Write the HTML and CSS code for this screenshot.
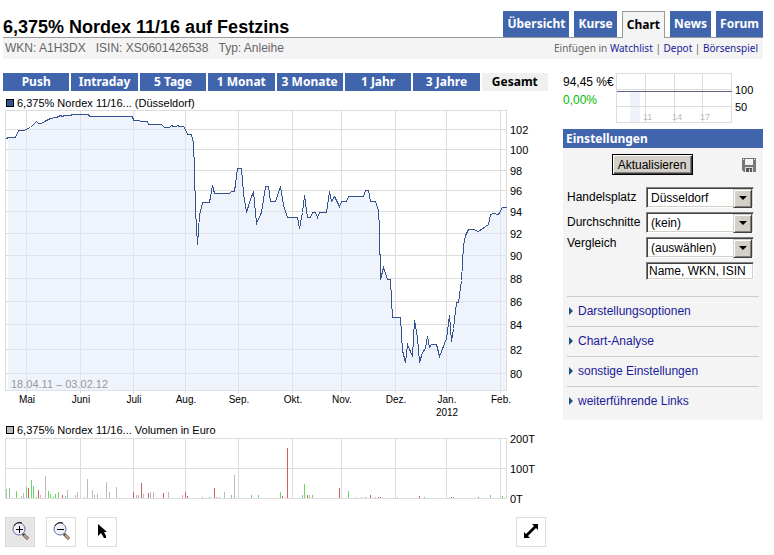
FILE: index.html
```html
<!DOCTYPE html>
<html lang="de">
  <head>
    <meta charset="UTF-8">
    <title>6,375% Nordex 11/16 auf Festzins - Chart</title>
    <link rel="stylesheet" href="styles.css">
  </head>
  <body>
    <div class="page">
      <header class="header">
        <h1 class="title">6,375% Nordex 11/16 auf Festzins</h1>
        <nav class="tabs">
          <a class="tab" href="#">Übersicht</a>
          <a class="tab" href="#">Kurse</a>
          <a class="tab tab-active" href="#">Chart</a>
          <a class="tab" href="#">News</a>
          <a class="tab" href="#">Forum</a>
        </nav>
      </header>
      <div class="subbar">
        <div class="ids">
          <span>WKN: A1H3DX</span>
          <span>ISIN: XS0601426538</span>
          <span>Typ: Anleihe</span>
        </div>
        <div class="add">Einfügen in <a href="#">Watchlist</a> | <a href="#">Depot</a> | <a href="#">Börsenspiel</a></div>
      </div>

      <div class="content">
        <main class="main">
          <div class="ranges">
            <button type="button" class="range">Push</button>
            <button type="button" class="range">Intraday</button>
            <button type="button" class="range">5 Tage</button>
            <button type="button" class="range">1 Monat</button>
            <button type="button" class="range">3 Monate</button>
            <button type="button" class="range">1 Jahr</button>
            <button type="button" class="range">3 Jahre</button>
            <button type="button" class="range range-active">Gesamt</button>
          </div>

          <div class="legend"><span class="swatch swatch-price"></span>6,375% Nordex 11/16... (Düsseldorf)</div>
          <svg class="chart" viewBox="3 110 545 312">
            <g transform="translate(.5 .5)">
              <path class="grid" d="M5 110H506V390H5ZM5 129H506M5 149H506M5 170H506M5 190H506M5 211H506M5 233H506M5 255H506M5 278H506M5 301H506M5 324H506M5 349H506M5 373H506M26 110V392M80 110V392M133 110V392M185 110V392M238 110V392M292 110V392M341 110V392M395 110V392M446 110V392M500 110V392"/>
              <path class="area" d="M7 390V138L8 137H15L18 130H23L30 127 36 121 38 123 41 123 46 120 50 118 56 117 60 115 62 116 64 115H70L72 114H88L89 116H132L133 120H139L140 121H147L148 124H161L164 127H169L171 125 173 126H176L177 125 179 126H183L185 129 187 134H191L193 143 194 170 195 210 197 244 199 215 202 202H209L212 185 214 193H229L231 191H234L237 168H241L243 193 246 212 249 202 253 191 256 223 261 212 265 186H268L270 201H275L280 186 283 205 287 217H297L299 228 302 212 304 195 307 217H310L312 212H315L317 217 319 212H326L329 191 331 201 334 196 339 206 341 201H346L348 196H363L365 190H368L370 201H375L378 210 379 228 380 279 383 267 387 279H390L391 300 392 317H400L402 350 405 362 407 344 412 356 414 320 417 337 419 362 422 352 425 348 427 336 429 347 431 344H436L439 356 446 338 449 315 451 341 453 328 456 302H458L461 280 463 245 465 235 468 229H473L478 231 488 224 490 214 493 213 498 214 502 207H505V390Z"/>
              <path class="line" d="M6 138L8 137H15L18 130H23L30 127 36 121 38 123 41 123 46 120 50 118 56 117 60 115 62 116 64 115H70L72 114H88L89 116H132L133 120H139L140 121H147L148 124H161L164 127H169L171 125 173 126H176L177 125 179 126H183L185 129 187 134H191L193 143 194 170 195 210 197 244 199 215 202 202H209L212 185 214 193H229L231 191H234L237 168H241L243 193 246 212 249 202 253 191 256 223 261 212 265 186H268L270 201H275L280 186 283 205 287 217H297L299 228 302 212 304 195 307 217H310L312 212H315L317 217 319 212H326L329 191 331 201 334 196 339 206 341 201H346L348 196H363L365 190H368L370 201H375L378 210 379 228 380 279 383 267 387 279H390L391 300 392 317H400L402 350 405 362 407 344 412 356 414 320 417 337 419 362 422 352 425 348 427 336 429 347 431 344H436L439 356 446 338 449 315 451 341 453 328 456 302H458L461 280 463 245 465 235 468 229H473L478 231 488 224 490 214 493 213 498 214 502 207H506"/>
            </g>
            <g class="axis">
              <text x="510" y="134">102</text>
              <text x="510" y="154">100</text>
              <text x="510" y="175">98</text>
              <text x="510" y="195">96</text>
              <text x="510" y="216">94</text>
              <text x="510" y="238">92</text>
              <text x="510" y="260">90</text>
              <text x="510" y="283">88</text>
              <text x="510" y="306">86</text>
              <text x="510" y="329">84</text>
              <text x="510" y="354">82</text>
              <text x="510" y="378">80</text>
            </g>
            <g class="months">
              <text x="27" y="403">Mai</text>
              <text x="81" y="403">Juni</text>
              <text x="134" y="403">Juli</text>
              <text x="186" y="403">Aug.</text>
              <text x="239" y="403">Sep.</text>
              <text x="293" y="403">Okt.</text>
              <text x="342" y="403">Nov.</text>
              <text x="396" y="403">Dez.</text>
              <text x="447" y="403">Jan.</text>
              <text x="447" y="416">2012</text>
              <text x="501" y="403">Feb.</text>
            </g>
            <text class="period" x="11" y="388">18.04.11 – 03.02.12</text>
          </svg>

          <div class="legend"><span class="swatch swatch-volume"></span>6,375% Nordex 11/16... Volumen in Euro</div>
          <svg class="chart" viewBox="3 437 545 68">
            <g transform="translate(.5 .5)">
              <path class="grid" d="M5 438H506V498H5ZM5 468H506M26 438V498M80 438V498M133 438V498M185 438V498M238 438V498M292 438V498M341 438V498M395 438V498M446 438V498M500 438V498"/>
            </g>
            <g transform="translate(.5)">
              <path class="vol vol-flat" d="M6 498v-9M21 498v-2M23 498v-5M40 498v-3M45 498v-22M67 498v-8M75 498v-3M77 498v-6M84 498v-1M87 498v-19M92 498v-8M94 498v-3M97 498v-4M106 498v-16M109 498v-6M116 498v-11M136 498v-3M138 498v-3M143 498v-4M150 498v-6M153 498v-6M168 498v-6M182 498v-3M216 498v-1M219 498v-1M224 498v-6M234 498v-23M309 498v-3M356 498v-1M361 498v-1M375 498v-1M397 498v-1"/>
              <path class="vol vol-up" d="M9 498v-10M16 498v-7M26 498v-11M31 498v-18M33 498v-12M36 498v-1M48 498v-7M50 498v-4M53 498v-1M55 498v-4M58 498v-6M65 498v-2M202 498v-1M209 498v-1M231 498v-3M251 498v-3M258 498v-3M280 498v-6M302 498v-3M304 498v-14M312 498v-3M348 498v-7M365 498v-1M424 498v-1M453 498v-1M490 498v-3M502 498v-2"/>
              <path class="vol vol-down" d="M28 498v-10M38 498v-8M62 498v-3M133 498v-6M141 498v-15M148 498v-5M163 498v-5M185 498v-6M187 498v-2M214 498v-10M282 498v-2M287 498v-50M307 498v-3M339 498v-10M370 498v-3M378 498v-1M380 498v-1M419 498v-2M451 498v-1M478 498v-1"/>
            </g>
            <g class="axis">
              <text x="510" y="443">200T</text>
              <text x="510" y="473">100T</text>
              <text x="510" y="503">0T</text>
            </g>
          </svg>

          <div class="tools">
            <button type="button" class="tool tool-active" aria-label="Vergrößern">
              <svg width="28" height="28" viewBox="0 0 28 28">
                <path d="M17 16l5 5" stroke="#333" stroke-width="3"/>
                <path d="M18 17l4 4" stroke="#c9a184" stroke-width="2"/>
                <circle cx="13" cy="11" r="6" fill="#eef0fa" stroke="#6a6a9c"/>
                <path d="M8 8a6 6 0 0 1 8-3" fill="none" stroke="#111"/>
                <path class="crisp" d="M10 11h7v1h-7zM13 8h1v7h-1z"/>
              </svg>
            </button>
            <button type="button" class="tool" aria-label="Verkleinern">
              <svg width="28" height="28" viewBox="0 0 28 28">
                <path d="M17 16l5 5" stroke="#333" stroke-width="3"/>
                <path d="M18 17l4 4" stroke="#c9a184" stroke-width="2"/>
                <circle cx="13" cy="11" r="6" fill="#eef0fa" stroke="#6a6a9c"/>
                <path d="M8 8a6 6 0 0 1 8-3" fill="none" stroke="#111"/>
                <path class="crisp" d="M10 11h7v1h-7z"/>
              </svg>
            </button>
            <button type="button" class="tool" aria-label="Auswahl">
              <svg width="28" height="28" viewBox="0 0 28 28">
                <path d="M10 6v12l3-3 3 5h2v-2l-2-4h3z"/>
              </svg>
            </button>
            <button type="button" class="tool tool-expand" aria-label="Chart vergrößern">
              <svg width="28" height="28" viewBox="0 0 28 28">
                <path d="M15 6h6v6l-2-2-8 8 2 2H7v-6l2 2 8-8z"/>
              </svg>
            </button>
          </div>
        </main>

        <aside class="sidebar">
          <div class="quote">
            <div class="quote-values">
              <div>94,45 %€</div>
              <div class="up">0,00%</div>
            </div>
            <svg class="mini" width="147" height="50" viewBox="616 73 147 50">
              <path class="band" d="M630 92h10v30h-10z"/>
              <g transform="translate(.5 .5)">
                <path class="grid" d="M616 73H731V122H616ZM616 89H731M616 106H731M645 73V122M674 73V122M702 73V122"/>
                <path class="mini-line" d="M616 91H731"/>
              </g>
              <g class="hours">
                <text x="643" y="120">11</text>
                <text x="672" y="120">14</text>
                <text x="700" y="120">17</text>
              </g>
              <g class="axis">
                <text x="735" y="94">100</text>
                <text x="735" y="111">50</text>
              </g>
            </svg>
          </div>

          <section class="panel">
            <h2 class="panel-title">Einstellungen</h2>
            <form class="settings">
              <div class="actions">
                <button type="button" class="refresh">Aktualisieren</button>
                <button type="button" class="save" aria-label="Speichern">
                  <svg width="14" height="14" viewBox="0 0 14 14">
                    <path fill="#777" d="M0 0h14v14H2l-2-2z"/>
                    <path fill="#f4f4f4" d="M3 1h8v6H3zM1 1h1v1H1zM12 1h1v1h-1z"/>
                    <path fill="#ddd" d="M3 9h8v5H3z"/>
                    <path fill="#555" d="M4 10h6v4H8v-3H7v3H4z"/>
                  </svg>
                </button>
              </div>
              <div class="fields">
                <label for="market">Handelsplatz</label>
                <div class="select-box">
                  <select id="market"><option>Düsseldorf</option></select>
                </div>
                <label for="average">Durchschnitte</label>
                <div class="select-box">
                  <select id="average"><option>(kein)</option></select>
                </div>
                <label class="label-top" for="compare">Vergleich</label>
                <div class="select-box">
                  <select id="compare"><option>(auswählen)</option></select>
                </div>
                <input class="search" type="text" aria-label="Vergleichswert" value="Name, WKN, ISIN">
              </div>
            </form>
            <ul class="links">
              <li><a href="#">Darstellungsoptionen</a></li>
              <li><a href="#">Chart-Analyse</a></li>
              <li><a href="#">sonstige Einstellungen</a></li>
              <li><a href="#">weiterführende Links</a></li>
            </ul>
          </section>
        </aside>
      </div>
    </div>
  </body>
</html>
```

FILE: styles.css
```css
* {
  box-sizing: border-box;
}
body {
  margin: 0;
  background-color: #fff;
  color: #000;
  font-family: "Liberation Sans", Arial, sans-serif;
  font-size: 12px;
}
a {
  color: #1a1a99;
  text-decoration: none;
}
button, select, input {
  font-family: inherit;
  font-size: 12px;
  color: #000;
}
button {
  padding: 0;
  cursor: pointer;
}
.page {
  padding: 11px 11px 8px 3px;
}

/* header */
.header {
  display: flex;
  justify-content: space-between;
  align-items: flex-end;
  border-bottom: 1px solid #999;
}
.title {
  margin: 0;
  font-size: 18px;
  line-height: 19px;
}
.tabs {
  display: flex;
  gap: 5px;
}
.tab {
  height: 26px;
  padding: 0 4px;
  background-color: #4165ad;
  color: #fff;
  font-family: "Noto Sans", Tahoma, sans-serif;
  font-size: 12px;
  font-weight: bold;
  line-height: 26px;
}
.tab-active {
  height: 27px;
  margin-bottom: -1px;
  border: 1px solid #999;
  border-bottom: none;
  background-color: #f4f4f4;
  color: #000;
}
.subbar {
  display: flex;
  justify-content: space-between;
  padding: 0 5px 0 2px;
  background-color: #f4f4f4;
  color: #666;
  line-height: 21px;
}
.ids {
  display: flex;
  gap: 10px;
}
.add {
  font-family: "Noto Sans", Tahoma, sans-serif;
  font-size: 10px;
}

/* chart column */
.content {
  display: flex;
  gap: 15px;
  margin-top: 14px;
}
.main {
  flex: 1;
  min-width: 0;
}
.ranges {
  display: grid;
  grid-template-columns: repeat(8, 1fr);
  gap: 2px;
  margin-bottom: 4px;
}
.range {
  height: 18px;
  border: none;
  background-color: #4165ad;
  color: #fff;
  font-family: "Noto Sans", Tahoma, sans-serif;
  font-size: 12px;
  font-weight: bold;
  line-height: 18px;
}
.range-active {
  background-color: #f0f0f0;
  color: #000;
}
.legend {
  display: flex;
  align-items: center;
  gap: 3px;
  height: 15px;
  padding-left: 3px;
  font-size: 11px;
}
.swatch {
  width: 8px;
  height: 8px;
  border: 1px solid #000;
}
.swatch-price {
  background-color: #34528c;
}
.swatch-volume {
  background-color: #bbb;
}
.chart {
  display: block;
  width: 100%;
  overflow: visible;
}
.grid, .line, .area, .vol, .band, .mini-line, .crisp {
  shape-rendering: crispEdges;
}
.grid {
  fill: none;
  stroke: #dcdcdc;
}
.area {
  fill: rgba(224, 231, 247, 0.5);
}
.line {
  fill: none;
  stroke: #34528c;
}
.vol {
  fill: none;
}
.vol-flat {
  stroke: #bbb;
}
.vol-up {
  stroke: #66d966;
}
.vol-down {
  stroke: #d06060;
}
.axis {
  font-size: 11px;
}
.months {
  font-size: 10px;
  text-anchor: middle;
}
.period {
  fill: #999;
  font-size: 11px;
}
.tools {
  display: flex;
  gap: 11px;
  margin-top: 12px;
  padding: 0 2px;
}
.tool {
  width: 30px;
  height: 30px;
  border: 1px solid #dcdcdc;
  background-color: #fff;
}
.tool svg {
  display: block;
}
.tool-active {
  background-color: #e6e6e6;
}
.tool-expand {
  margin-left: auto;
}

/* sidebar */
.sidebar {
  width: 200px;
}
.quote {
  display: flex;
  height: 50px;
  line-height: 18px;
}
.quote-values {
  width: 53px;
  white-space: nowrap;
}
.up {
  color: #00bb00;
}
.band {
  fill: #eff2fb;
}
.mini-line {
  fill: none;
  stroke: #5a6088;
}
.hours {
  fill: #bbb;
  font-size: 9px;
}
.panel {
  margin-top: 6px;
  background-color: #f4f4f4;
}
.panel-title {
  margin: 0;
  padding-left: 3px;
  background-color: #4165ad;
  color: #fff;
  font-family: "Noto Sans", Tahoma, sans-serif;
  font-size: 12px;
  line-height: 19px;
}
.settings {
  padding: 6px 4px 16px;
}
.actions {
  display: grid;
  grid-template-columns: 1fr auto 1fr;
  align-items: center;
  padding: 0 3px 0 0;
}
.refresh {
  grid-column: 2;
  width: 81px;
  height: 21px;
  margin-right: 19px;
  border: 1px solid #000;
  background-color: #d4d0c8;
  box-shadow: inset 1px 1px #fff, inset -1px -1px #404040, inset -2px -2px #808080;
}
.save {
  justify-self: end;
  height: 14px;
  border: none;
  background: none;
}
.save svg {
  display: block;
}
.fields {
  display: grid;
  grid-template-columns: 79px 108px;
  row-gap: 4px;
  margin-top: 12px;
}
.fields label {
  line-height: 20px;
}
.fields .label-top {
  line-height: 12px;
}
.select-box {
  position: relative;
  height: 21px;
}
.select-box select {
  appearance: none;
  display: block;
  width: 100%;
  height: 21px;
  padding: 0 20px 0 4px;
}
.select-box select, .search {
  border: 1px solid;
  border-color: #808080 #fff #fff #808080;
  border-radius: 0;
  background-color: #fff;
  box-shadow: inset 1px 1px #404040, inset -1px -1px #d4d0c8;
}
.select-box::before {
  content: "";
  position: absolute;
  top: 2px;
  right: 2px;
  width: 17px;
  height: 17px;
  border: 1px solid;
  border-color: #d4d0c8 #404040 #404040 #d4d0c8;
  background-color: #d4d0c8;
  box-shadow: inset 1px 1px #fff, inset -1px -1px #808080;
  pointer-events: none;
}
.select-box::after {
  content: "";
  position: absolute;
  top: 9px;
  right: 7px;
  border: 4px solid transparent;
  border-top-color: #000;
  border-bottom: none;
  pointer-events: none;
}
.search {
  grid-column: 2;
  width: 108px;
  height: 18px;
  padding: 0 2px;
}
.links {
  margin: 0 4px;
  padding: 0 0 4px;
  list-style: none;
}
.links li {
  display: flex;
  align-items: center;
  gap: 5px;
  height: 30px;
  padding: 0 0 2px 2px;
  border-top: 1px solid #ccc;
}
.links li::before {
  content: "";
  border: 4px solid transparent;
  border-left-color: #20507f;
  border-right: none;
}
```
